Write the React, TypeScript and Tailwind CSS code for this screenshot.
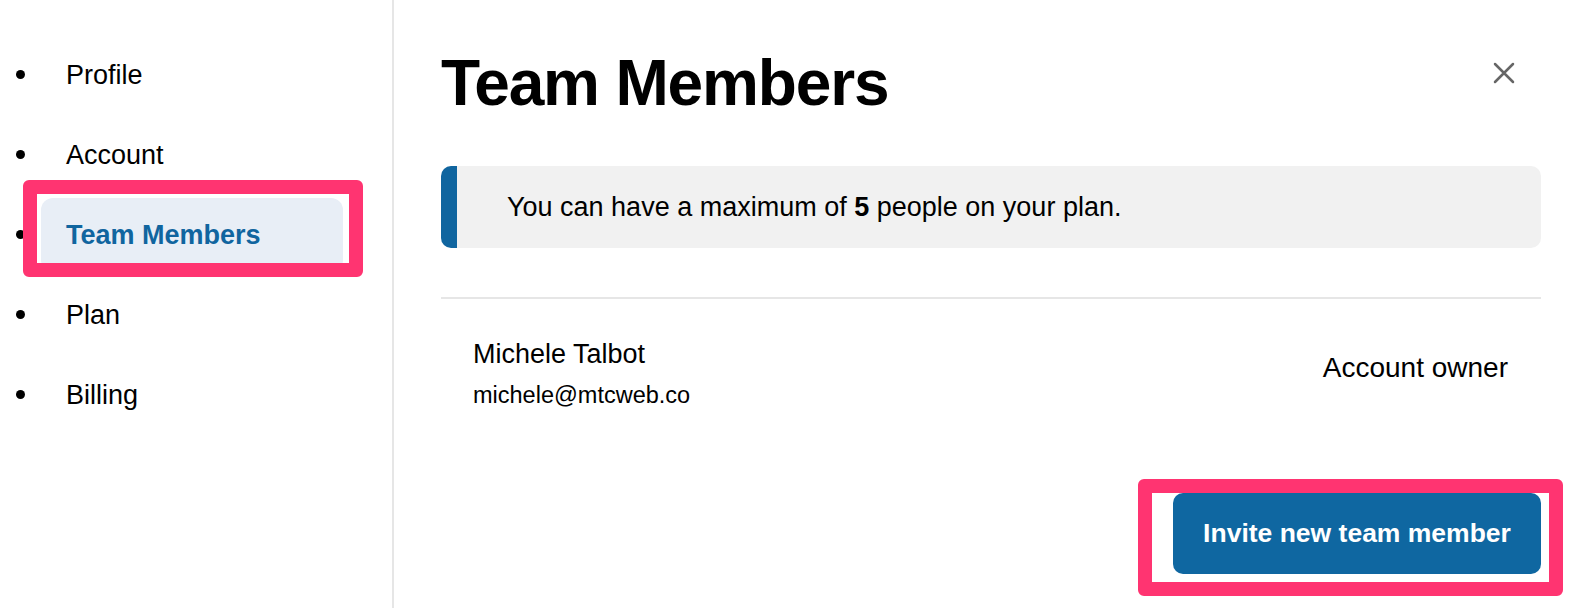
import { useState } from "react";

const navItems = ["Profile", "Account", "Team Members", "Plan", "Billing"];

export default function App(): JSX.Element {
    const [active] = useState<string>("Team Members");

    return (
        <div className="flex h-[608px] w-[1578px] bg-white text-black font-['Liberation_Sans',Arial,sans-serif] overflow-hidden">
            {/* サイドバー */}
            <aside className="w-[394px] shrink-0 border-r-2 border-[#e6e6e6]">
                <ul className="list-disc pl-[41px] pt-[35px] text-[27px] marker:text-[30px]">
                    {navItems.map((item) => (
                        <li key={item} className="py-[3px]">
                            {item === active ? (
                                <div className="relative">
                                    <a className="flex h-[74px] w-[302px] items-center rounded-[12px] bg-[#e8eef6] px-[25px] font-bold text-[#10659f]" href="#">
                                        {item}
                                    </a>
                                    <div className="absolute -left-[18px] -top-[18px] h-[97px] w-[340px] rounded-[6px] border-[14px] border-[#ff3471]" />
                                </div>
                            ) : (
                                <a className="flex h-[74px] items-center px-[25px]" href="#">{item}</a>
                            )}
                        </li>
                    ))}
                </ul>
            </aside>

            {/* メイン */}
            <main className="flex-1 pl-[47px] pr-[37px] pt-[51px]">
                <div className="flex items-start justify-between">
                    <h1 className="text-[64px] font-bold leading-none tracking-[-0.018em]">Team Members</h1>
                    <button className="mr-[26px] mt-[11px] text-[#666]" aria-label="Close">
                        <svg width="22" height="22" viewBox="0 0 22 22" fill="none" stroke="currentColor" strokeWidth="2.5" strokeLinecap="round">
                            <path d="M2 2L20 20M20 2L2 20" />
                        </svg>
                    </button>
                </div>

                <div className="mt-[51px] flex h-[82px] items-center rounded-[10px] border-l-[16px] border-[#10659f] bg-[#f1f1f1] pl-[50px] text-[27px]">
                    <p>You can have a maximum of <b>5</b> people on your plan.</p>
                </div>

                <div className="mt-[49px] h-[2px] bg-[#e6e6e6]" />

                <div className="flex justify-between pl-[32px] pr-[33px] pt-[37px]">
                    <div>
                        <p className="text-[27px] leading-[36px]">Michele Talbot</p>
                        <p className="mt-[7px] text-[23.5px] leading-[32px]">michele@mtcweb.co</p>
                    </div>
                    <p className="mt-[14px] text-[28px] leading-[36px]">Account owner</p>
                </div>

                <div className="mt-[82px] flex justify-end">
                    <div className="relative">
                        <button className="h-[81px] w-[368px] rounded-[10px] bg-[#0f67a1] text-[26.5px] font-bold text-white">
                            Invite new team member
                        </button>
                        <div className="absolute -left-[35px] -top-[14px] h-[117px] w-[425px] rounded-[6px] border-[14px] border-[#ff3471]" />
                    </div>
                </div>
            </main>
        </div>
    );
}
